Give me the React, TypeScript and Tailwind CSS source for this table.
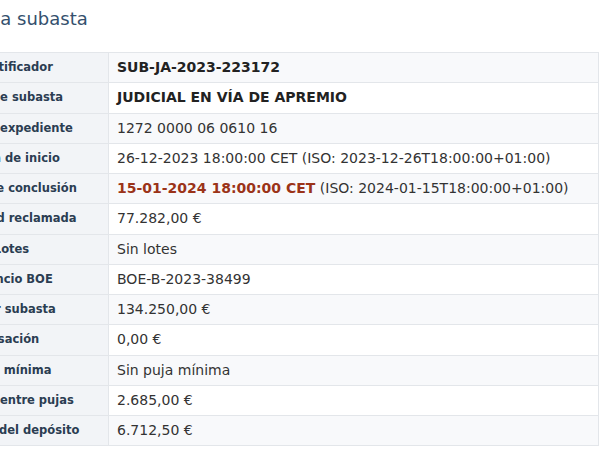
const rows: { label: string; value: React.ReactNode }[] = [
  { label: 'Identificador', value: <span className="font-bold text-[#222]">SUB-JA-2023-223172</span> },
  { label: 'Tipo de subasta', value: <span className="font-bold text-[#222]">JUDICIAL EN VÍA DE APREMIO</span> },
  { label: 'Cuenta expediente', value: '1272 0000 06 0610 16' },
  { label: 'Fecha de inicio', value: '26-12-2023 18:00:00 CET (ISO: 2023-12-26T18:00:00+01:00)' },
  {
    label: 'Fecha de conclusión',
    value: (
      <>
        <span className="font-bold text-[#9b3318]">15-01-2024 18:00:00 CET</span> (ISO: 2024-01-15T18:00:00+01:00)
      </>
    ),
  },
  { label: 'Cantidad reclamada', value: '77.282,00 €' },
  { label: 'Lotes', value: 'Sin lotes' },
  { label: 'Anuncio BOE', value: 'BOE-B-2023-38499' },
  { label: 'Valor subasta', value: '134.250,00 €' },
  { label: 'Tasación', value: '0,00 €' },
  { label: 'Puja mínima', value: 'Sin puja mínima' },
  { label: 'Tramos entre pujas', value: '2.685,00 €' },
  { label: 'Importe del depósito', value: '6.712,50 €' },
];

export default function App() {
  return (
    <div className="w-[600px] h-[460px] overflow-hidden bg-white font-['DejaVu_Sans',sans-serif]">
      <div className="w-[690px] -ml-[91px] pt-[5px]">
        <h2 className="text-[18px] leading-[28px] font-normal text-[#34506d] mb-[19px]">Datos de la subasta</h2>
        <div className="border-t border-[#e3e6ea]">
          {rows.map((r, i) => (
            <div key={r.label} className="flex h-[30.25px] border-b border-[#e3e6ea]">
              <div className="w-[200px] shrink-0 flex items-center justify-center pl-[6px] bg-[#f2f4f7] border-r border-[#e3e6ea] text-[11.5px] font-bold text-[#2b3d52] whitespace-nowrap">
                {r.label}
              </div>
              <div
                className={`flex-1 flex items-center px-2 text-[14px] text-[#333] whitespace-nowrap border-r border-[#e3e6ea] ${
                  i % 2 === 0 ? 'bg-[#f8f9fb]' : 'bg-white'
                }`}
              >
                <span>{r.value}</span>
              </div>
            </div>
          ))}
        </div>
      </div>
    </div>
  );
}
